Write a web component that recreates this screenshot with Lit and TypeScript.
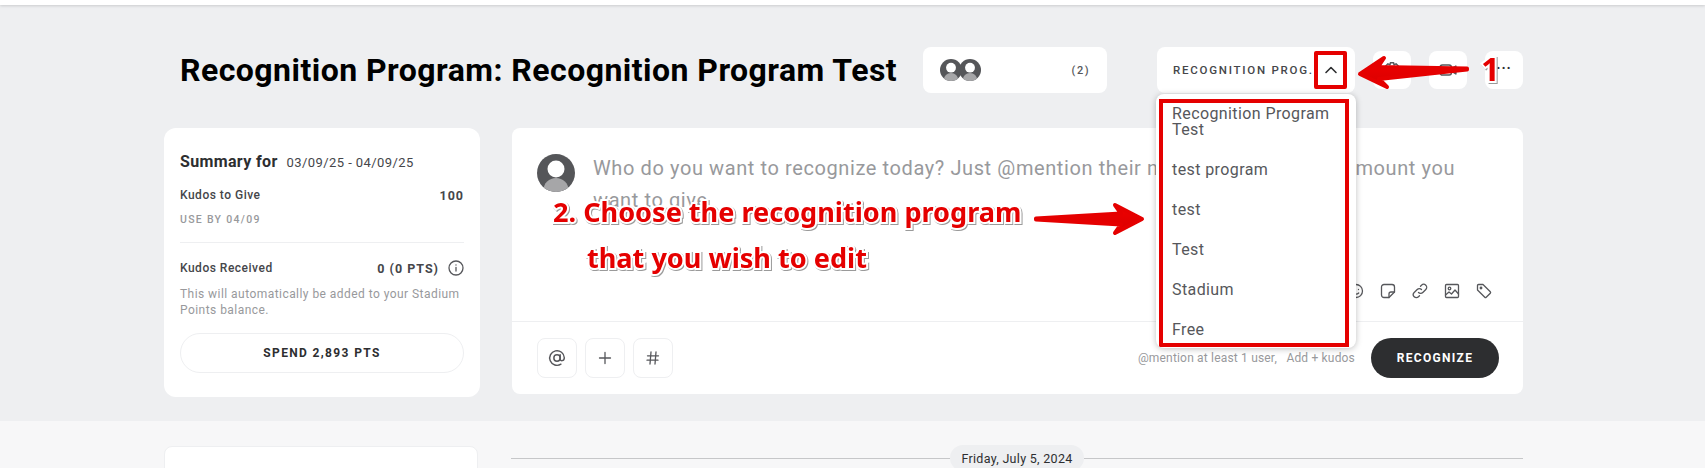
import { LitElement, html, css, svg } from "lit";
import { customElement } from "lit/decorators.js";

const avatar = (size: number) => html`<svg width=${size} height=${size} viewBox="0 0 38 38" class="avatar">
  <defs><clipPath id="c"><circle cx="19" cy="19" r="19"/></clipPath></defs>
  <g clip-path="url(#c)"><rect width="38" height="38" fill="#555659"/>
  <ellipse cx="19" cy="36" rx="12.5" ry="12" fill="#a6a6a8"/>
  <circle cx="19" cy="15" r="8.5" fill="#fff"/></g></svg>`;

const ic = (body: unknown, size = 16, vb = 16) => html`<svg width=${size} height=${size} viewBox="0 0 ${vb} ${vb}" fill="none" stroke="#56575b" stroke-width="1.3" stroke-linecap="round" stroke-linejoin="round">${body}</svg>`;

@customElement("app-root")
export class AppRoot extends LitElement {
  static styles = css`
    :host { display: block; position: relative; width: 1705px; height: 468px; overflow: hidden; font-family: Roboto, "Liberation Sans", sans-serif; color: #2d2e30; background: #f7f7f8; }
    .topbar { height: 5px; background: #fff; box-shadow: 0 1px 3px rgba(0,0,0,.15); position: relative; }
    .hero { background: #eeeff1; height: 416px; box-sizing: border-box; padding: 42px 182px 0 164px; }
    .head { display: flex; align-items: center; height: 46px; margin-bottom: 35px; }
    h1 { margin: 0 0 0 16px; width: 743px; flex: none; font-size: 32px; font-weight: 700; letter-spacing: 0.46px; color: #000; white-space: nowrap; line-height: 46px; }
    .people { width: 184px; flex: none; height: 46px; box-sizing: border-box; background: #fff; border-radius: 8px; display: flex; align-items: center; justify-content: space-between; padding: 0 17px; margin-right: 50px; }
    .stack { display: flex; }
    .stack svg + svg { margin-left: -3px; }
    .count { font-size: 11px; font-weight: 500; letter-spacing: 1.5px; color: #56575b; }
    .select { position: relative; width: 198px; flex: none; height: 46px; box-sizing: border-box; background: #fff; border-radius: 8px; display: flex; align-items: center; padding: 0 0 0 16px; margin-right: 18px; }
    .select-label { font-size: 11.5px; font-weight: 500; letter-spacing: 1.75px; color: #45464a; white-space: nowrap; }
    .chev { position: absolute; left: 157px; top: 4px; width: 33px; height: 38px; box-sizing: border-box; border: 4px solid #e50000; display: flex; align-items: center; justify-content: center; border-radius: 2px; background: #fff; }
    .menu { position: absolute; left: -1px; top: 47px; width: 200px; height: 254px; background: #fff; border-radius: 8px; box-shadow: 0 1px 6px rgba(0,0,0,.25); overflow: hidden; z-index: 3; }
    .menu-item { font-size: 16px; line-height: 16px; letter-spacing: 0.4px; color: #56575b; padding: 12px 16px; }
    .menu-frame { position: absolute; left: 3px; top: 5px; width: 190px; height: 248px; box-sizing: border-box; border: 4px solid #e50000; }
    .ibtn { width: 38px; height: 38px; flex: none; background: #fff; border-radius: 8px; display: flex; align-items: center; justify-content: center; margin-right: 18px; }
    .ibtn:last-child { margin-right: 0; }
    .dots { font-size: 14px; font-weight: 700; letter-spacing: 1px; line-height: 1; margin-bottom: 5px; }
    .cols { display: flex; gap: 32px; align-items: flex-start; }
    .side { width: 316px; height: 269px; box-sizing: border-box; background: #fff; border-radius: 12px; padding: 24px 16px 0; }
    .sum { display: flex; align-items: baseline; gap: 9px; height: 22px; margin-bottom: 11px; }
    .sum b { font-size: 16px; font-weight: 700; letter-spacing: .35px; }
    .sum span { font-size: 13px; letter-spacing: .42px; color: #45464a; }
    .row { display: flex; justify-content: space-between; align-items: center; font-size: 12px; font-weight: 500; letter-spacing: .5px; color: #45464a; height: 20px; }
    .row b { font-weight: 700; font-size: 12.5px; letter-spacing: 1px; }
    .use { font-size: 10.5px; font-weight: 500; letter-spacing: 1.3px; color: #98999c; margin-top: 8px; line-height: 14px; }
    .sep { height: 1px; background: #eeeff1; margin: 15px 0 15px; }
    .rcv b { margin-left: auto; margin-right: 9px; }
    .note { font-size: 12px; line-height: 16px; letter-spacing: .45px; color: #98999c; margin: 8px 0 0; }
    .spend { height: 40px; box-sizing: border-box; margin-top: 15px; border: 1px solid #eeeff1; border-radius: 20px; display: flex; align-items: center; justify-content: center; font-size: 12px; font-weight: 700; letter-spacing: 1.35px; color: #2d2e30; }
    .main { width: 1011px; height: 266px; background: #fff; border-radius: 8px; display: flex; flex-direction: column; }
    .editor { height: 194px; flex: none; box-sizing: border-box; border-bottom: 1px solid #eeeff1; padding: 26px 31px 22px 25px; display: flex; flex-direction: column; justify-content: space-between; }
    .compose { display: flex; gap: 18px; }
    .ph { font-size: 20px; line-height: 32px; letter-spacing: .6px; color: #98999c; width: 870px; margin-top: -2px; }
    .tools { display: flex; justify-content: flex-end; gap: 16px; }
    .foot { display: flex; align-items: center; padding: 16px 24px 16px 25px; }
    .sq { width: 40px; height: 40px; box-sizing: border-box; border: 1px solid #eeeff1; border-radius: 8px; display: flex; align-items: center; justify-content: center; margin-right: 8px; }
    .hint { margin-left: auto; font-size: 12px; letter-spacing: .18px; color: #98999c; }
    .rec { width: 128px; height: 40px; margin-left: 16px; border-radius: 20px; background: #2d2e30; color: #fff; display: flex; align-items: center; justify-content: center; font-size: 12px; font-weight: 700; letter-spacing: 1.3px; }
    .low { display: flex; gap: 33px; padding: 25px 182px 0 164px; }
    .low-card { width: 314px; height: 60px; background: #fff; border: 1px solid #eeeff1; border-radius: 8px; box-sizing: border-box; flex: none; }
    .time { flex: 1; display: flex; align-items: center; height: 26px; margin-top: -1px; }
    .line { flex: 1; height: 1px; background: #c6c7c9; }
    .pill { width: 134px; height: 26px; border-radius: 13px; background: #eeeff1; display: flex; align-items: center; justify-content: center; font-size: 12.5px; letter-spacing: .3px; color: #2d2e30; }
    .over { position: absolute; inset: 0; pointer-events: none; z-index: 5; }
    .anno { position: absolute; font-family: "Noto Sans", "Open Sans", sans-serif; font-weight: 700; color: #e50000; white-space: nowrap; font-size: 27.1px; line-height: 38px;
      -webkit-text-stroke: 4px #fff; paint-order: stroke fill; filter: drop-shadow(1px 1px 0 #9a9a9a); }
    .a1 { left: 553px; top: 193px; }
    .a2 { left: 587px; top: 239px; }
    .a3 { left: 1481px; top: 47px; font-size: 33px; line-height: 44px; }
  `;

  render() {
    return html`
      <div class="topbar"></div>
      <section class="hero">
        <header class="head">
          <h1>Recognition Program: Recognition Program Test</h1>
          <div class="people">
            <div class="stack">${avatar(22)}${avatar(22)}</div>
            <span class="count">(2)</span>
          </div>
          <div class="select">
            <span class="select-label">RECOGNITION PROG..</span>
            <div class="chev">${ic(svg`<path d="M3 10.500 8 5.500l5 5" stroke="#2d2e30" stroke-width="1.600"/>`)}</div>
            <div class="menu">
              <div class="menu-item">Recognition Program Test</div>
              <div class="menu-item">test program</div>
              <div class="menu-item">test</div>
              <div class="menu-item">Test</div>
              <div class="menu-item">Stadium</div>
              <div class="menu-item">Free</div>
              <div class="menu-frame"></div>
            </div>
          </div>
          <div class="ibtn">${ic(svg`<circle cx="8" cy="8" r="2.200"/><path d="M6.600 1.500h2.800l.4 2 1.800-1 2 2-1 1.800 2 .4v2.800l-2 .4 1 1.800-2 2-1.800-1-.4 2H6.600l-.4-2-1.800 1-2-2 1-1.800-2-.4V6.700l2-.4-1-1.800 2-2 1.800 1z"/>`, 18)}</div>
          <div class="ibtn">${ic(svg`<rect x="1" y="3.500" width="10" height="9" rx="2"/><path d="m11 7 4-2.500v7L11 9"/>`, 18)}</div>
          <div class="ibtn"><span class="dots">···</span></div>
        </header>
        <div class="cols">
          <aside class="side">
            <div class="sum"><b>Summary for</b><span>03/09/25 - 04/09/25</span></div>
            <div class="row"><span>Kudos to Give</span><b>100</b></div>
            <div class="use">USE BY 04/09</div>
            <div class="sep"></div>
            <div class="row rcv"><span>Kudos Received</span><b>0 (0 PTS)</b>
              ${ic(svg`<circle cx="8" cy="8" r="7"/><path d="M8 7.300v3.700M8 4.800v.2"/>`, 16)}</div>
            <p class="note">This will automatically be added to your Stadium Points balance.</p>
            <div class="spend">SPEND 2,893 PTS</div>
          </aside>
          <main class="main">
            <div class="editor">
              <div class="compose">${avatar(38)}
                <div class="ph">Who do you want to recognize today? Just @mention their name and the kudos amount you want to give</div>
              </div>
              <div class="tools">
                ${ic(svg`<circle cx="8" cy="8" r="6.500"/><path d="M5.500 6.300v.2M10.500 6.300v.2M5.300 10c1.500 1.600 3.900 1.600 5.400 0"/>`)}
                ${ic(svg`<path d="M4 1.500h8A2.500 2.500 0 0 1 14.500 4v5L9 14.500H4A2.500 2.500 0 0 1 1.500 12V4A2.500 2.500 0 0 1 4 1.500z"/><path d="M14.500 9H11a2 2 0 0 0-2 2v3.500"/>`)}
                ${ic(svg`<path d="M6.500 9.500a3 3 0 0 0 4.300 0l3-3a3 3 0 0 0-4.300-4.300l-1 1"/><path d="M9.500 6.500a3 3 0 0 0-4.300 0l-3 3a3 3 0 0 0 4.300 4.300l1-1"/>`)}
                ${ic(svg`<rect x="1.500" y="1.500" width="13" height="13" rx="1"/><circle cx="5.500" cy="5.500" r="1.300"/><path d="m1.500 12 3.500-3 2.500 2 3.500-4 3.500 4"/>`)}
                ${ic(svg`<path d="M1.500 2.500a1 1 0 0 1 1-1H7l7.300 7.300a1 1 0 0 1 0 1.400l-4.100 4.100a1 1 0 0 1-1.400 0L1.500 7z"/><circle cx="5" cy="5" r=".8"/>`)}
              </div>
            </div>
            <div class="foot">
              <div class="sq">${ic(svg`<circle cx="8" cy="8" r="2.800"/><path d="M10.800 5.200v3.600c0 2.400 3.700 2 3.700-1A6.500 6.500 0 1 0 11.500 13.500"/>`, 18)}</div>
              <div class="sq">${ic(svg`<path d="M8 2.500v11M2.500 8h11"/>`)}</div>
              <div class="sq">${ic(svg`<path d="M6 2 5 14M11 2l-1 12M2.500 5.800h11M2 10.200h11"/>`)}</div>
              <span class="hint">@mention at least 1 user,&nbsp;&nbsp; Add + kudos</span>
              <div class="rec">RECOGNIZE</div>
            </div>
          </main>
        </div>
      </section>
      <section class="low">
        <div class="low-card"></div>
        <div class="time"><div class="line"></div><div class="pill">Friday, July 5, 2024</div><div class="line"></div></div>
      </section>
      <div class="over">
        <svg width="1705" height="468" style="position:absolute;left:0;top:0">
          <defs><linearGradient id="g" x1="0" y1="0" x2="0" y2="1"><stop offset="0" stop-color="#f00000"/><stop offset="1" stop-color="#d80000"/></linearGradient></defs>
          <g fill="url(#g)" stroke="#e50000" stroke-width="4" stroke-linejoin="round">
            <path d="M1142 219 1115 205 1121 213.500 1036 218.500 1036 219.500 1121 224.500 1115 233z"/>
            <path d="M1360 74 1384 58 1378 67 1467 68.500 1467 69.500 1379 79 1387 87z"/>
          </g>
        </svg>
        <div class="anno a1">2. Choose the recognition program</div>
        <div class="anno a2">that you wish to edit</div>
        <div class="anno a3">1</div>
      </div>
    `;
  }
}
